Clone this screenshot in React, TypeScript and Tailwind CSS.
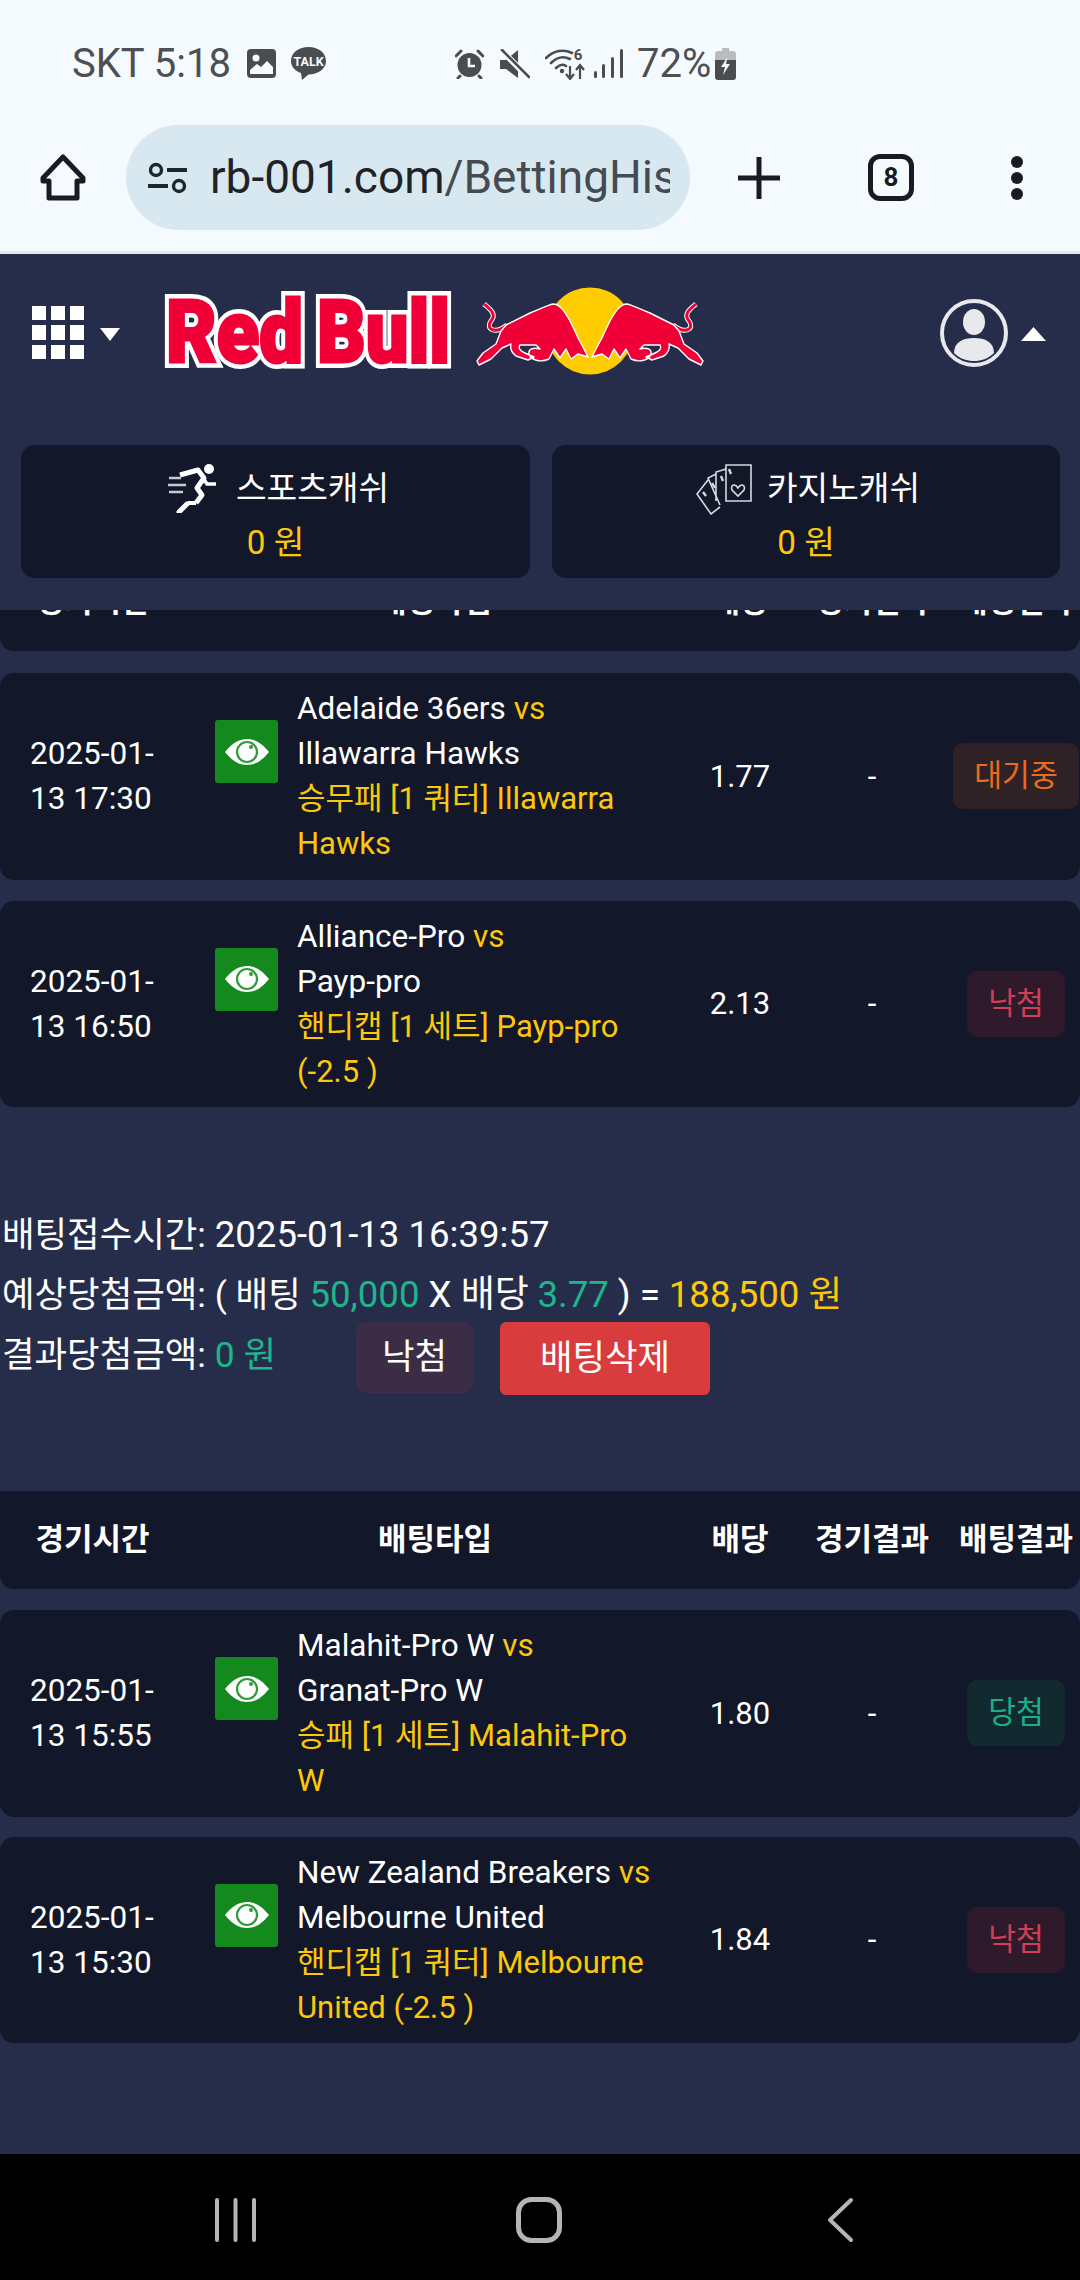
import React from 'react';

type BetResult = 'pending' | 'lost' | 'won';

interface BetRow {
  time: [string, string];
  home: string;
  away: string;
  market: string;
  odds: string;
  result: BetResult;
}

const firstRows: BetRow[] = [
  { time: ['2025-01-', '13 17:30'], home: 'Adelaide 36ers', away: 'Illawarra Hawks', market: '승무패 [1 쿼터] Illawarra Hawks', odds: '1.77', result: 'pending' },
  { time: ['2025-01-', '13 16:50'], home: 'Alliance-Pro', away: 'Payp-pro', market: '핸디캡 [1 세트] Payp-pro (-2.5 )', odds: '2.13', result: 'lost' },
];

const secondRows: BetRow[] = [
  { time: ['2025-01-', '13 15:55'], home: 'Malahit-Pro W', away: 'Granat-Pro W', market: '승패 [1 세트] Malahit-Pro W', odds: '1.80', result: 'won' },
  { time: ['2025-01-', '13 15:30'], home: 'New Zealand Breakers', away: 'Melbourne United', market: '핸디캡 [1 쿼터] Melbourne United (-2.5 )', odds: '1.84', result: 'lost' },
];

const columns = 'grid grid-cols-[185px_500px_110px_154px_131px]';

const StatusIcons: React.FC = () => (
  <>
    <svg className="ml-[19px] shrink-0" width="29" height="29" viewBox="0 0 29 29">
      <rect width="29" height="29" rx="4" fill="#4a4c4f" />
      <circle cx="9" cy="9" r="3.5" fill="#f5faff" />
      <path d="M3 25 L3 21 L10 15 L14 18 L20 12 L26 18 L26 25 Z" fill="#f5faff" />
    </svg>
    <svg className="ml-[15px] shrink-0" width="35" height="33" viewBox="0 0 35 33">
      <path d="M17.5 0 C27 0 35 5.5 35 14 C35 22 27 27.5 17.5 27.5 L11 33 L10 26 C4 24 0 19.5 0 14 C0 5.5 8 0 17.5 0 Z" fill="#4a4c4f" />
      <text x="17.5" y="19" textAnchor="middle" fontSize="12.5" fontWeight="700" fill="#f5faff">TALK</text>
    </svg>
    <svg className="ml-[129px] shrink-0" width="29" height="30" viewBox="0 0 29 30">
      <circle cx="14.5" cy="16" r="12" fill="#4a4c4f" />
      <path d="M14 9 V17 H20" stroke="#f5faff" strokeWidth="2.6" fill="none" />
      <path d="M1 7 L6 2 M28 7 L23 2 M5 27 L3 29 M24 27 L26 29" stroke="#4a4c4f" strokeWidth="3" strokeLinecap="round" />
    </svg>
    <svg className="ml-[16px] shrink-0" width="30" height="30" viewBox="0 0 30 30">
      <path d="M0 11 H6 L18 1 V29 L6 20 H0 Z" fill="#4a4c4f" />
      <path d="M1 1 L29 29" stroke="#f5faff" strokeWidth="6" />
      <path d="M2 1 L29 28" stroke="#4a4c4f" strokeWidth="2.6" strokeLinecap="round" />
    </svg>
    <svg className="ml-[15px] shrink-0" width="40" height="33" viewBox="0 0 40 33">
      <path d="M1 11 C9 3 19 2 27 6 M6 16 C12 10 19 9 25 12 M11 21 C14 18 18 17 21 19" stroke="#4a4c4f" strokeWidth="2.6" fill="none" strokeLinecap="round" />
      <circle cx="17" cy="24" r="2.2" fill="#4a4c4f" />
      <text x="33" y="13" textAnchor="middle" fontSize="15" fontWeight="700" fill="#4a4c4f">6</text>
      <path d="M25 19 V31 M21 27 L25 32 L29 27 M35 32 V19 M31 23 L35 18 L39 23" stroke="#4a4c4f" strokeWidth="2.2" fill="none" />
    </svg>
    <svg className="ml-[9px] shrink-0" width="29" height="29" viewBox="0 0 29 29">
      <rect x="0" y="22" width="3" height="7" rx="1.5" fill="#4a4c4f" />
      <rect x="8" y="15" width="3" height="14" rx="1.5" fill="#4a4c4f" />
      <rect x="17" y="8" width="3" height="21" rx="1.5" fill="#4a4c4f" />
      <rect x="26" y="0" width="3" height="29" rx="1.5" fill="#4a4c4f" />
    </svg>
  </>
);

const BatteryIcon: React.FC = () => (
  <svg className="ml-[7px] shrink-0" width="21" height="32" viewBox="0 0 21 32">
    <path d="M7 0 H14 V3 H18 Q21 3 21 6 V12 H0 V6 Q0 3 3 3 H7 Z" fill="#b9bbbd" />
    <path d="M0 12 H21 V29 Q21 32 18 32 H3 Q0 32 0 29 Z" fill="#4a4c4f" />
    <path d="M12.5 9 L6 19 H10 L8 27 L15 16 H11 Z" fill="#f5faff" />
  </svg>
);

const BrowserBar: React.FC = () => (
  <div className="flex h-[105px] items-center">
    <svg className="ml-[40px] shrink-0" width="46" height="47" viewBox="0 0 46 47">
      <path d="M23 3 L43 24 V27 H37 V44 H9 V27 H3 V24 Z" fill="none" stroke="#181c20" strokeWidth="5" strokeLinejoin="round" />
    </svg>
    <div className="ml-[40px] flex h-[105px] w-[564px] shrink-0 items-center rounded-full bg-[#d8e8f0]">
      <svg className="ml-[22px] shrink-0" width="39" height="32" viewBox="0 0 39 32">
        <circle cx="8" cy="8" r="5.5" fill="none" stroke="#22262b" strokeWidth="3.4" />
        <path d="M19 8 H39 M0 24 H20" stroke="#22262b" strokeWidth="3.8" />
        <circle cx="31" cy="24" r="5.5" fill="none" stroke="#22262b" strokeWidth="3.4" />
      </svg>
      <div className="ml-[23px] w-[460px] overflow-hidden whitespace-nowrap text-[46px] leading-[105px] text-[#454b51]">
        <span className="text-[#1f2328]">rb-001.com</span>/BettingHistory
      </div>
    </div>
    <svg className="ml-[48px] shrink-0" width="42" height="42" viewBox="0 0 42 42">
      <path d="M21 0 V42 M0 21 H42" stroke="#181c20" strokeWidth="5" strokeLinecap="round" />
    </svg>
    <div className="ml-[88px] flex h-[47px] w-[46px] shrink-0 items-center justify-center rounded-[12px] border-[5px] border-[#181c20] text-[26px] font-bold text-[#181c20]">
      8
    </div>
    <div className="ml-[97px] flex h-[44px] w-[12px] shrink-0 flex-col justify-between">
      <div className="size-[12px] rounded-full bg-[#181c20]" />
      <div className="size-[12px] rounded-full bg-[#181c20]" />
      <div className="size-[12px] rounded-full bg-[#181c20]" />
    </div>
  </div>
);

const Bull: React.FC = () => (
  <g stroke="#fff" strokeWidth="1.4" strokeLinejoin="round">
    <path d="M14 19 C20 24 27 29 21 36 C15 44 25 50 37 40" fill="none" stroke="#fff" strokeWidth="5" />
    <path d="M14 19 C20 24 27 29 21 36 C15 44 25 50 37 40" fill="none" stroke="#f00037" strokeWidth="3" />
    <path
      d="M36 40 L60 28 C70 24 78 20 83 19 C90 19 95 27 100 36 C103 42 106 48 108 53 C111 58 115 66 118 72 L108 69 L101 74 L96 64 L90 73 L84 64 L79 74 C70 78 61 75 59 69 C58 64 63 62 70 64 L66 60 L50 60 C48 63 50 66 55 68 L64 72 L58 75 L46 71 C41 67 40 63 41 59 L32 63 L21 74 L9 80 L7 76 L13 68 L26 59 L31 46 Z"
      fill="#f00037"
    />
  </g>
);

const Logo: React.FC = () => (
  <div className="ml-[29px] flex h-[95px] items-center">
    <svg width="320" height="80" viewBox="0 0 320 80">
      <g fontWeight="900" fontSize="88">
        <g fill="#fff" stroke="#fff" strokeWidth="12" strokeLinejoin="miter">
          <text x="17" y="71" textLength="137" lengthAdjust="spacingAndGlyphs">Red</text>
          <text x="168" y="71" textLength="133" lengthAdjust="spacingAndGlyphs">Bull</text>
        </g>
        <g fill="#f00037" stroke="#f00037" strokeWidth="3">
          <text x="17" y="71" textLength="137" lengthAdjust="spacingAndGlyphs">Red</text>
          <text x="168" y="71" textLength="133" lengthAdjust="spacingAndGlyphs">Bull</text>
        </g>
      </g>
    </svg>
    <svg className="ml-[1px]" width="240" height="92" viewBox="0 0 240 92">
      <circle cx="120" cy="46" r="43.5" fill="#ffcc00" />
      <Bull />
      <g transform="translate(240,0) scale(-1,1)">
        <Bull />
      </g>
    </svg>
  </div>
);

const Header: React.FC = () => (
  <div className="flex h-[191px] shrink-0 items-start pt-[29px]">
    <div className="ml-[32px] mt-[23px] grid h-[53px] w-[52px] shrink-0 grid-cols-3 gap-[5px]">
      {Array.from({ length: 9 }).map((_, i) => (
        <div key={i} className="bg-white" />
      ))}
    </div>
    <svg className="ml-[16px] mt-[45px] shrink-0" width="20" height="13" viewBox="0 0 20 13">
      <path d="M0 0 H20 L10 13 Z" fill="#fff" />
    </svg>
    <Logo />
    <svg className="ml-[230px] mt-[15px] shrink-0" width="68" height="70" viewBox="0 0 68 70">
      <circle cx="34" cy="35" r="32" fill="none" stroke="#e8e9ec" strokeWidth="4" />
      <ellipse cx="34" cy="24" rx="11" ry="13" fill="#e8e9ec" />
      <path d="M14 55 C14 44 23 40 34 40 C45 40 54 44 54 55 C48 61 41 63 34 63 C27 63 20 61 14 55 Z" fill="#e8e9ec" />
    </svg>
    <svg className="ml-[13px] mt-[44px] shrink-0" width="25" height="14" viewBox="0 0 25 14">
      <path d="M12.5 0 L25 14 H0 Z" fill="#fff" />
    </svg>
  </div>
);

const RunnerIcon: React.FC = () => (
  <svg width="48" height="49" viewBox="0 0 48 49">
    <circle cx="41" cy="5" r="5" fill="#fff" />
    <path d="M12 11 L30 6 L36 14 L29 24 L34 31 L28 39" fill="none" stroke="#fff" strokeWidth="5" strokeLinejoin="round" />
    <path d="M35 14 L39 20 H48" fill="none" stroke="#fff" strokeWidth="3.6" />
    <path d="M28 39 H20" stroke="#fff" strokeWidth="4" />
    <path d="M19 40 L11 48" stroke="#fff" strokeWidth="5" strokeLinecap="round" />
    <path d="M1 14 H13 M0 21 H18 M1 28 H15" stroke="#c8cad2" strokeWidth="2.4" />
  </svg>
);

const CardsIcon: React.FC = () => (
  <svg width="56" height="52" viewBox="0 0 56 52" fill="none" stroke="#d8d9de" strokeWidth="1.6">
    <path d="M30 2 H55 V38 H30 Z" />
    <path d="M30 6 L20 9 V38 M20 11 L12 15 L24 42 M12 17 L1 31 L15 51 L24 44" />
    <path d="M42 25 C39 20 34 22 36 27 L42 33 L48 27 C50 22 45 20 42 25 Z" />
    <path d="M33 6 L35 11 M25 13 L27 18 M16 20 L19 25 M7 29 L10 33" strokeWidth="2.4" />
  </svg>
);

const CashCards: React.FC = () => (
  <div className="flex shrink-0 gap-[22px] pl-[21px] pr-[20px]">
    <div className="flex h-[133px] w-[509px] flex-col items-center rounded-[14px] bg-[#121729] pt-[19px]">
      <div className="flex h-[49px] items-center gap-[20px] pl-[6px] text-[33.3px] text-white">
        <RunnerIcon />
        스포츠캐쉬
      </div>
      <div className="mt-[5px] text-[33.3px] leading-[50px] text-[#fdc70c]">0 원</div>
    </div>
    <div className="flex h-[133px] w-[508px] flex-col items-center rounded-[14px] bg-[#121729] pt-[19px]">
      <div className="flex h-[49px] items-center gap-[15px] pl-[4px] text-[33.3px] text-white">
        <CardsIcon />
        카지노캐쉬
      </div>
      <div className="mt-[5px] text-[33.3px] leading-[50px] text-[#fdc70c]">0 원</div>
    </div>
  </div>
);

const TableHeader: React.FC = () => (
  <div className={`${columns} h-[98px] shrink-0 items-center rounded-b-[14px] bg-[#121729] text-center text-[31px] font-bold text-white`}>
    <div>경기시간</div>
    <div>배팅타입</div>
    <div>배당</div>
    <div>경기결과</div>
    <div className="pl-[3px] whitespace-nowrap">배팅결과</div>
  </div>
);

const ResultBadge: React.FC<{ result: BetResult }> = ({ result }) => {
  if (result === 'pending') {
    return <div className="rounded-[10px] bg-[#2f2226] px-[21.5px] text-[30.25px] leading-[66px] text-[#ec6a1c]">대기중</div>;
  }
  if (result === 'won') {
    return <div className="rounded-[10px] bg-[#12292f] px-[21.5px] text-[30.25px] leading-[66px] text-[#1cae88]">당첨</div>;
  }
  return <div className="rounded-[10px] bg-[#2e1a2a] px-[21.5px] text-[30.25px] leading-[66px] text-[#d03f55]">낙첨</div>;
};

const EyeButton: React.FC = () => (
  <div className="mt-[34px] flex size-[63px] shrink-0 items-center justify-center rounded-[3px] bg-[#148a1e]">
    <svg width="44" height="28" viewBox="0 0 44 28">
      <path d="M0 14 C8 4 15 1 22 1 C29 1 36 4 44 14 C36 24 29 27 22 27 C15 27 8 24 0 14 Z" fill="#fff" />
      <circle cx="22" cy="14" r="10" fill="none" stroke="#2f9a3a" strokeWidth="2.2" />
      <circle cx="26" cy="9" r="2" fill="#2f9a3a" />
    </svg>
  </div>
);

const Row: React.FC<{ row: BetRow }> = ({ row }) => (
  <div className={`${columns} h-[206.5px] shrink-0 items-center rounded-[14px] bg-[#121729] text-[31px] leading-[45px] text-white`}>
    <div className="pl-[30px] text-[31.5px]">
      <div>{row.time[0]}</div>
      <div>{row.time[1]}</div>
    </div>
    <div className="flex items-start self-stretch py-[13px] pl-[30px]">
      <EyeButton />
      <div className="ml-[19px] w-[360px]">
        <div className="text-[31.5px]">
          {row.home} <span className="text-[#fdc70c]">vs</span>
        </div>
        <div className="text-[31.5px]">{row.away}</div>
        <div className="text-[#fdc70c]">{row.market}</div>
      </div>
    </div>
    <div className="text-center">{row.odds}</div>
    <div className="text-center">-</div>
    <div className="flex justify-center pl-[3px]">
      <ResultBadge result={row.result} />
    </div>
  </div>
);

const BetSummary: React.FC = () => (
  <div className="mt-[98px] shrink-0 pl-[2px] text-[35.4px] text-white">
    <div className="leading-[60px]">
      배팅접수시간: <span className="text-[36.6px]">2025-01-13 16:39:57</span>
    </div>
    <div className="leading-[60px]">
      예상당첨금액: ( 배팅 <span className="text-[36.6px] text-[#1fb58c]">50,000</span>{' '}
      <span className="text-[37px]">X 배당</span> <span className="text-[36.6px] text-[#1fb58c]">3.77</span>{' '}
      <span className="text-[37px]">) =</span> <span className="text-[36.6px] text-[#fdc70c]">188,500 원</span>
    </div>
    <div className="-mt-[3px] flex items-start">
      <div className="w-[354px] shrink-0 leading-[66px]">
        결과당첨금액: <span className="text-[#1fb58c]">0 원</span>
      </div>
      <div className="flex h-[71px] w-[117px] items-center justify-center rounded-[10px] bg-[#3b2d46]">낙첨</div>
      <div className="ml-[27px] flex h-[73px] w-[210px] items-center justify-center rounded-[6px] bg-[#d83c3c]">배팅삭제</div>
    </div>
  </div>
);

const NavBar: React.FC = () => (
  <div className="flex h-[126px] shrink-0 items-center bg-black pt-[5px]">
    <svg className="ml-[214px]" width="44" height="46" viewBox="0 0 44 46">
      <path d="M3 3 V43 M21.5 3 V43 M40 3 V43" stroke="#b5b5b5" strokeWidth="4" strokeLinecap="round" />
    </svg>
    <svg className="ml-[257px]" width="48" height="48" viewBox="0 0 48 48">
      <rect x="3.5" y="3.5" width="41" height="41" rx="13" fill="none" stroke="#b5b5b5" strokeWidth="5" />
    </svg>
    <svg className="ml-[263px]" width="30" height="46" viewBox="0 0 30 46">
      <path d="M25 3 L4 23 L25 43" fill="none" stroke="#b5b5b5" strokeWidth="4" strokeLinecap="round" strokeLinejoin="round" />
    </svg>
  </div>
);

export default function App() {
  return (
    <div className="flex h-[2280px] w-[1080px] flex-col overflow-hidden bg-[#252d4a] font-[Roboto,'Noto_Sans_CJK_KR',sans-serif]">
      <div className="h-[254px] shrink-0 border-b-[3px] border-[#e4e9ee] bg-[#f5faff]">
        <div className="flex h-[125px] items-center pl-[72px] pt-[2px] text-[40px] text-[#4d4f52]">
          <span className="w-[156px] shrink-0 whitespace-nowrap">SKT 5:18</span>
          <StatusIcons />
          <span className="ml-[14px] w-[71px] shrink-0 whitespace-nowrap">72%</span>
          <BatteryIcon />
        </div>
        <BrowserBar />
      </div>

      <Header />
      <CashCards />

      <div className="mt-[32px] flex h-[41px] shrink-0 flex-col justify-end overflow-hidden">
        <TableHeader />
      </div>
      <div className="mt-[22px] flex shrink-0 flex-col gap-[21px]">
        {firstRows.map((row) => (
          <Row key={row.home} row={row} />
        ))}
      </div>

      <BetSummary />

      <div className="mt-[96px]">
        <TableHeader />
      </div>
      <div className="mt-[21px] flex shrink-0 flex-col gap-[20px]">
        {secondRows.map((row) => (
          <Row key={row.home} row={row} />
        ))}
      </div>

      <div className="flex-1" />
      <NavBar />
    </div>
  );
}
